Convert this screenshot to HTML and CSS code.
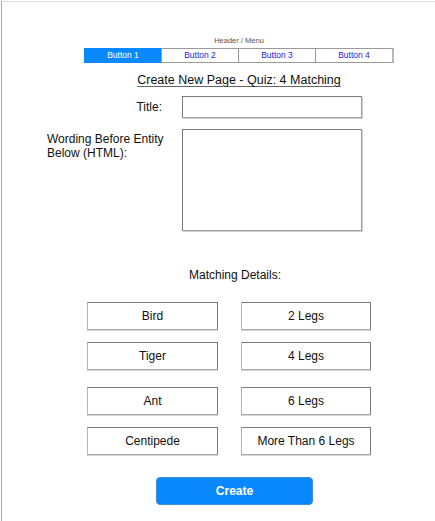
FILE: index.html
```html
<!DOCTYPE html>
<html>
<head>
<meta charset="utf-8">
<link rel="stylesheet" href="styles.css">
</head>
<body>
<div class="frame">
  <div class="hdr">Header / Menu</div>
  <nav class="nav">
    <div class="nav-btn active">Button 1</div>
    <div class="nav-btn">Button 2</div>
    <div class="nav-btn">Button 3</div>
    <div class="nav-btn">Button 4</div>
  </nav>
  <div class="page-title"><span>Create New Page - Quiz: 4 Matching</span></div>
  <div class="form">
    <label class="lbl lbl-right">Title:</label>
    <div class="input"></div>
    <label class="lbl lbl-top">Wording Before Entity<br>Below (HTML):</label>
    <div class="textarea"></div>
  </div>
  <div class="md">Matching Details:</div>
  <div class="match">
    <div class="cell">Bird</div>
    <div class="cell">2 Legs</div>
    <div class="cell">Tiger</div>
    <div class="cell">4 Legs</div>
  </div>
  <div class="match match-2">
    <div class="cell">Ant</div>
    <div class="cell">6 Legs</div>
    <div class="cell">Centipede</div>
    <div class="cell">More Than 6 Legs</div>
  </div>
  <div class="create">Create</div>
</div>
</body>
</html>
```
FILE: styles.css
```css
html, body {
  margin: 0;
  padding: 0;
  background: #fff;
}
body {
  font-family: "Liberation Sans", Arial, sans-serif;
  color: #111;
}
.frame {
  margin: 1px 0 0 1px;
  border-top: 1px solid #dcdcdc;
  border-left: 1px solid #a8a8a8;
  height: 519px;
  overflow: hidden;
}
.hdr {
  margin: 34px 0 0 82px;
  width: 310px;
  text-align: center;
  font-size: 7.5px;
  line-height: 9px;
  color: #555;
}
.nav {
  margin: 3px 0 0 82px;
  width: 310px;
  height: 15px;
  box-sizing: border-box;
  display: flex;
  border: 1px solid #9a9a9a;
  border-right: 2px solid #b8b8b8;
}
.nav-btn {
  flex: 1;
  font-size: 8.5px;
  line-height: 13px;
  text-align: center;
  color: #2323e6;
  border-left: 1px solid #9a9a9a;
}
.nav-btn.active {
  border-left: none;
  background: #0a89ff;
  color: #fff;
  margin: -1px 0 -1px -1px;
  line-height: 15px;
  padding-left: 1px;
}
.page-title {
  margin: 10px 0 0 82px;
  width: 310px;
  text-align: center;
  font-size: 12.5px;
  line-height: 15px;
  color: #111;
}
.page-title span {
  text-decoration: underline;
  text-decoration-color: #666;
  text-decoration-thickness: 1px;
  text-underline-offset: 2px;
}
.form {
  margin: 8px 0 0 45px;
  display: grid;
  grid-template-columns: 116px 180px;
  column-gap: 19px;
  row-gap: 11px;
}
.lbl {
  font-size: 12px;
  line-height: 14px;
  color: #111;
  white-space: nowrap;
}
.lbl-right {
  text-align: right;
  align-self: center;
  padding-right: 1px;
}
.lbl-top {
  padding-top: 3px;
}
.input, .textarea {
  box-sizing: border-box;
  border: 1px solid #7c7c7c;
  border-right-color: #a0a0a0;
  border-bottom-color: #a0a0a0;
  box-shadow: 1px 1px 0 #d0d0d0;
  background: #fff;
}
.input {
  height: 22px;
}
.textarea {
  height: 102px;
}
.md {
  margin: 37px 0 0 78px;
  width: 310px;
  text-align: center;
  font-size: 12px;
  line-height: 14px;
}
.match {
  margin: 20px 0 0 85px;
  display: grid;
  grid-template-columns: 131px 130px;
  column-gap: 23px;
  row-gap: 12px;
}
.match-2 {
  margin-top: 17px;
}
.cell {
  box-sizing: border-box;
  height: 28px;
  border: 1px solid #7a7a7a;
  border-left-color: #b4b4b4;
  border-bottom-color: #a8a8a8;
  box-shadow: 0 1px 0 #d6d6d6;
  font-size: 12px;
  line-height: 26px;
  text-align: center;
  color: #111;
}
.create {
  margin: 22px 0 0 154px;
  width: 157px;
  height: 28px;
  box-sizing: border-box;
  border-radius: 4px;
  border: 1px solid #3d8fd9;
  background: #0a89ff;
  color: #fff;
  font-weight: bold;
  font-size: 12px;
  line-height: 26px;
  text-align: center;
}
```
